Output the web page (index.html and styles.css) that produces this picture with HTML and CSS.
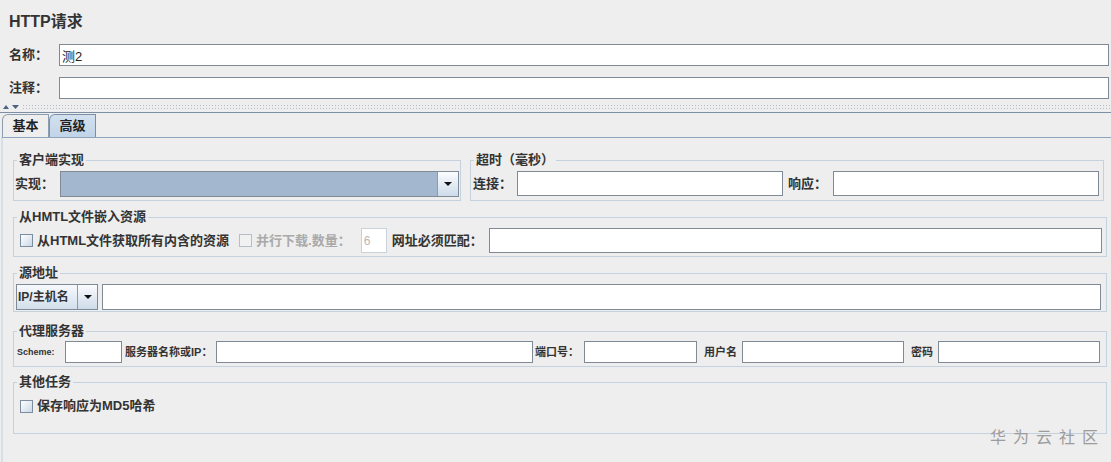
FILE: index.html
```html
<!DOCTYPE html>
<html lang="zh-CN">
<head>
<meta charset="utf-8"/>
<title>HTTP请求</title>
<link rel="stylesheet" href="styles.css">
</head>
<body>
<div class="head">
  <h1 class="title">HTTP请求</h1>
  <div class="row"><label class="lbl name-lbl">名称：</label><input class="txt" type="text" value="测2"></div>
  <div class="row"><label class="lbl name-lbl">注释：</label><input class="txt" type="text"></div>
</div>

<!-- séparateur repliable -->
<div class="splitter">
  <svg class="arrows" width="22" height="6" viewBox="0 0 22 6">
    <polygon points="3,5 6,1 9,5"/>
    <polygon points="12,1 19,1 15.5,5"/>
  </svg>
  <div class="bumps"></div>
</div>

<div class="tabs">
  <div class="tab">基本</div>
  <div class="tab on">高级</div>
</div>

<div class="tab-body">
  <div class="line">
    <fieldset class="grp grp-impl">
      <legend>客户端实现</legend>
      <div class="grp-row r-impl">
        <span class="lbl impl-lbl">实现：</span>
        <div class="combo combo-impl"><span class="combo-val"></span><span class="combo-btn"><i class="tri"></i></span></div>
      </div>
    </fieldset>
    <fieldset class="grp grp-timeout">
      <legend>超时（毫秒）</legend>
      <div class="grp-row r-timeout">
        <span class="lbl t-lbl">连接：</span>
        <input class="txt t-in" type="text">
        <span class="lbl t-lbl t-lbl2">响应：</span>
        <input class="txt t-in" type="text">
      </div>
    </fieldset>
  </div>

  <div class="line gap9">
    <fieldset class="grp">
      <legend>从HMTL文件嵌入资源</legend>
      <div class="grp-row r-embed">
        <span class="chk"></span>
        <span class="lbl chk-text">从HTML文件获取所有内含的资源</span>
        <span class="chk off"></span>
        <span class="lbl chk-text dim">并行下载.数量：</span>
        <input class="txt num" type="text" value="6" disabled>
        <span class="lbl url-lbl">网址必须匹配：</span>
        <input class="txt grow" type="text">
      </div>
    </fieldset>
  </div>

  <div class="line gap9">
    <fieldset class="grp">
      <legend>源地址</legend>
      <div class="grp-row r-src">
        <div class="combo combo-src"><span class="combo-val">IP/主机名</span><span class="combo-btn"><i class="tri"></i></span></div>
        <input class="txt grow src-in" type="text">
      </div>
    </fieldset>
  </div>

  <div class="line gap12">
    <fieldset class="grp">
      <legend>代理服务器</legend>
      <div class="grp-row r-proxy">
        <span class="plbl scheme">Scheme:</span>
        <input class="txt p-scheme" type="text">
        <span class="plbl l-host">服务器名称或IP：</span>
        <input class="txt grow" type="text">
        <span class="plbl l-port">端口号：</span>
        <input class="txt p-port" type="text">
        <span class="plbl l-user">用户名</span>
        <input class="txt p-user" type="text">
        <span class="plbl l-pass">密码</span>
        <input class="txt p-user" type="text">
      </div>
    </fieldset>
  </div>

  <div class="line gap8">
    <fieldset class="grp">
      <legend>其他任务</legend>
      <div class="grp-row r-other">
        <span class="chk"></span>
        <span class="lbl chk-text">保存响应为MD5哈希</span>
      </div>
    </fieldset>
  </div>
</div>

<div class="watermark">华为云社区</div>
</body>
</html>
```

FILE: styles.css
```css
:root{--bg:#eeeeee;--text:#333;--field:#7f8a96;--grp:#c4d1df;--blue:#c7d8ea;}
*{box-sizing:border-box;}
html,body{margin:0;padding:0;}
body{background:var(--bg);color:var(--text);font-family:"Liberation Sans","Noto Sans CJK SC",sans-serif;height:100vh;overflow:hidden;position:relative;}

/* en-tête */
.head{padding:11px 2px 0 9px;}
.title{margin:0 0 11px;font-size:16px;line-height:22px;font-weight:bold;color:#333;}
.row{display:flex;align-items:center;height:22px;}
.row + .row{margin-top:11px;}
.lbl{font-size:13px;line-height:16px;font-weight:bold;color:var(--text);white-space:nowrap;}
.name-lbl{width:50px;flex:none;}
.txt{height:100%;border:1px solid var(--field);background:#fff;padding:0 2px;font:13px/16px "Liberation Sans","Noto Sans CJK SC",sans-serif;color:#222;outline:none;margin:0;min-width:0;}
.row .txt{flex:1;height:22px;}

/* séparateur */
.splitter{height:14px;display:flex;align-items:flex-start;border-bottom:1px solid #7d8fa5;padding-top:5px;}
.arrows{flex:none;fill:#4a6284;}
.bumps{flex:1;height:6px;background-image:radial-gradient(circle,#b4bdc7 0.7px,transparent 0.9px);background-size:3px 3px;}

/* onglets */
.tabs{display:flex;height:24px;padding:1px 0 0 2px;}
.tab{width:47px;height:23px;border:1px solid #8d9db0;border-bottom:none;border-radius:6px 0 0 0;font-size:13px;line-height:21px;font-weight:bold;text-align:center;color:#222;background:var(--bg);}
.tab.on{background:linear-gradient(#d3e1ef,#c1d4e8);border-color:#7b8ea6;}
.tab-body{height:calc(100vh - 137px);margin-left:1px;border-left:2px solid #d4dfea;border-top:1px solid #8fa5bf;padding:15px 4px 0 10px;}

/* groupes */
.line{display:flex;}
.gap9{margin-top:9px;}
.gap12{margin-top:12px;}
.gap8{margin-top:8px;}
.grp{flex:1;margin:0;padding:0;border:1px solid var(--grp);min-inline-size:0;}
.grp legend{margin-left:3px;padding:0 2px;font-size:13px;line-height:14px;font-weight:bold;color:var(--text);}
.grp-row{display:flex;align-items:center;}
.grp-impl{flex:none;width:448px;margin-right:9px;}
.grp-timeout{margin-right:3px;}
.r-impl{height:26px;box-sizing:content-box;padding:4px 1px 3px 1px;}
.impl-lbl{width:45px;flex:none;}
.r-timeout{height:25px;box-sizing:content-box;padding:4px 4px 3px 2px;}
.t-lbl{width:44px;flex:none;}
.t-lbl2{width:45px;margin-left:5px;}
.t-in{flex:1;}

.combo{display:flex;height:100%;border:1px solid var(--field);}
.combo-impl{flex:1;background:#a3b8cf;}
.combo-val{flex:1;font-size:13px;line-height:24px;font-weight:bold;padding-left:2px;white-space:nowrap;}
.combo-btn{width:21px;flex:none;display:flex;align-items:center;justify-content:center;border-left:1px solid #8d9cad;background:linear-gradient(#fbfcfe,#cddbe9);}
.tri{display:block;width:0;height:0;border-left:4px solid transparent;border-right:4px solid transparent;border-top:4px solid #111;}

.r-embed{height:25px;box-sizing:content-box;padding:4px 4px 3px 6px;}
.chk{width:13px;height:13px;flex:none;border:1px solid #7d8da0;background:linear-gradient(135deg,#fff,#c9d8e7);}
.chk.off{border-color:#b6bdc5;background:#f1f1f1;margin-left:10px;}
.chk-text{margin-left:4px;}
.dim{color:#a9a9a9;}
.num{width:26px;flex:none;margin-left:10px;border-color:#c9d1da;color:#b8b8b8;font-size:12px;}
.url-lbl{margin-left:5px;width:97px;flex:none;}
.grow{flex:1;}

.r-src{height:26px;box-sizing:content-box;padding:4px 5px 1px 2px;}
.combo-src{width:82px;flex:none;background:linear-gradient(#f7f9fc,#d3dfec);}
.combo-src .combo-val{padding-left:1px;font-size:12px;}
.combo-src .combo-btn{width:20px;}
.src-in{margin-left:4px;}

.r-proxy{height:22px;box-sizing:content-box;padding:3px 6px 3px 3px;}
.plbl{flex:none;font-size:11px;line-height:12px;font-weight:bold;color:#333;white-space:nowrap;overflow:hidden;}
.plbl.scheme{font-size:9px;width:48px;}
.l-host{margin-left:3px;width:91px;}
.l-port{margin-left:2px;width:49px;}
.l-user{margin-left:7px;width:38px;}
.l-pass{margin-left:7px;width:27px;}
.p-scheme{width:57px;flex:none;}
.p-port{width:113px;flex:none;}
.p-user{width:162px;flex:none;}

.r-other{height:20px;box-sizing:content-box;padding:7px 6px 17px 6px;}

/* filigrane */
.watermark{position:absolute;right:6px;bottom:18px;font:16px/16px "Noto Sans CJK SC",sans-serif;letter-spacing:7px;color:#9c9c9c;}
```
